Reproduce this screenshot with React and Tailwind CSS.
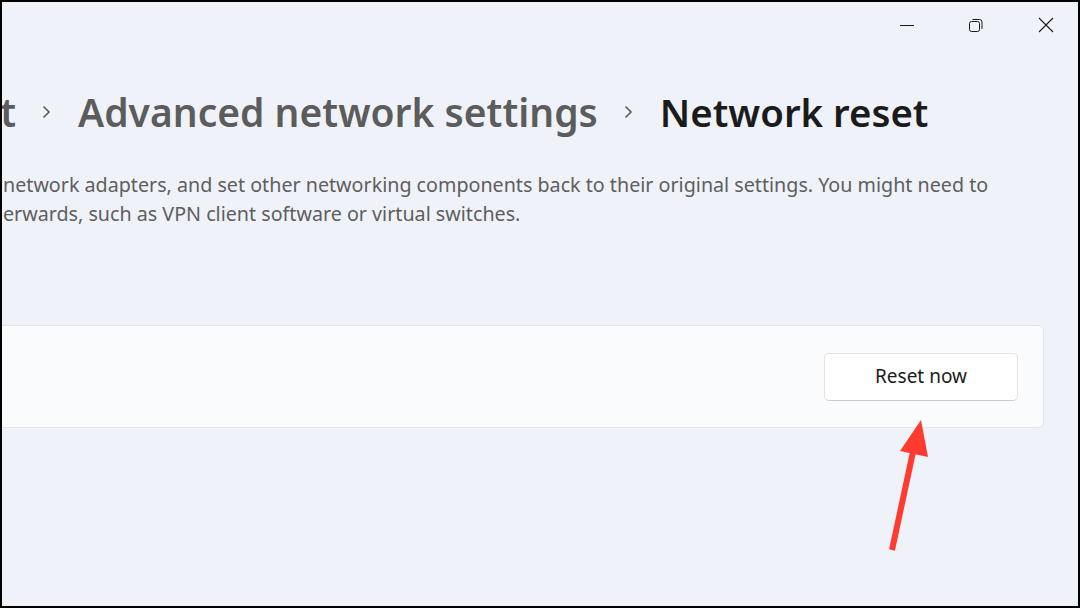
import React from 'react';

const font = { fontFamily: '"Noto Sans", "Open Sans", sans-serif' };

const Chevron = () => (
    <svg width="12" height="14" viewBox="0 0 12 14" className="shrink-0">
        <path d="M2.5 1.5 L8 7 L2.5 12.5" fill="none" stroke="#5c5c5c" strokeWidth="1.6" />
    </svg>
);

const WindowControls = () => (
    <div className="flex justify-end items-center h-[46px]">
        <button className="w-[62px] h-[46px] flex items-center justify-center">
            <svg width="16" height="16" viewBox="0 0 16 16">
                <path d="M1 8.5 H15" stroke="#1a1a1a" strokeWidth="1" />
            </svg>
        </button>
        <button className="w-[76px] h-[46px] flex items-center justify-center">
            <svg width="16" height="16" viewBox="0 0 16 16">
                <rect x="1.5" y="4.5" width="10" height="10" rx="2" fill="none" stroke="#1a1a1a" strokeWidth="1" />
                <path d="M4.5 2.5 H11.5 A2.5 2.5 0 0 1 14 5 V12" fill="none" stroke="#1a1a1a" strokeWidth="1" />
            </svg>
        </button>
        <button className="w-[64px] h-[46px] flex items-center justify-center">
            <svg width="16" height="16" viewBox="0 0 16 16">
                <path d="M1 1 L15 15 M15 1 L1 15" stroke="#1a1a1a" strokeWidth="1.1" />
            </svg>
        </button>
    </div>
);

export default function App() {
    return (
        <div
            className="relative w-[1080px] h-[608px] overflow-hidden border-2 border-black bg-[#eff3f9]"
            style={font}
        >
            <WindowControls />

            {/* Breadcrumb header */}
            <div className="flex items-center gap-[25px] mt-[38px] whitespace-nowrap text-[39px] font-semibold leading-[52px]">
                <span className="flex justify-end overflow-hidden w-[14px] text-[#5c5c5c]">
                    <span>Network &amp; internet</span>
                </span>
                <Chevron />
                <span className="text-[#5c5c5c]">Advanced network settings</span>
                <Chevron />
                <span className="text-[#1b1b1b] text-[38.4px]">Network reset</span>
            </div>

            {/* Description */}
            <div className="mt-[32px] ml-[1px] text-[19.7px] leading-[29px] text-[#5e5e5e] whitespace-nowrap">
                <p>network adapters, and set other networking components back to their original settings. You might need to</p>
                <p>erwards, such as VPN client software or virtual switches.</p>
            </div>

            {/* Reset card */}
            <div className="mt-[97px] ml-[-10px] mr-[34px] h-[103px] flex items-center justify-end pr-[25px] rounded-md border border-[#e2e5ea] bg-[#fafbfd]">
                <button className="w-[194px] h-[48px] rounded-[5px] border border-[#e3e3e3] border-b-[#cdcdcd] bg-white text-[19px] text-[#1b1b1b]">
                    Reset now
                </button>
            </div>

            {/* Annotation arrow */}
            <svg className="absolute left-0 top-0 pointer-events-none" width="1080" height="608" viewBox="-2 -2 1080 608">
                <line x1="888" y1="546" x2="909" y2="448" stroke="#ff3b30" strokeWidth="6" />
                <polygon points="917,416 924,453 896,447" fill="#ff3b30" />
            </svg>
        </div>
    );
}
